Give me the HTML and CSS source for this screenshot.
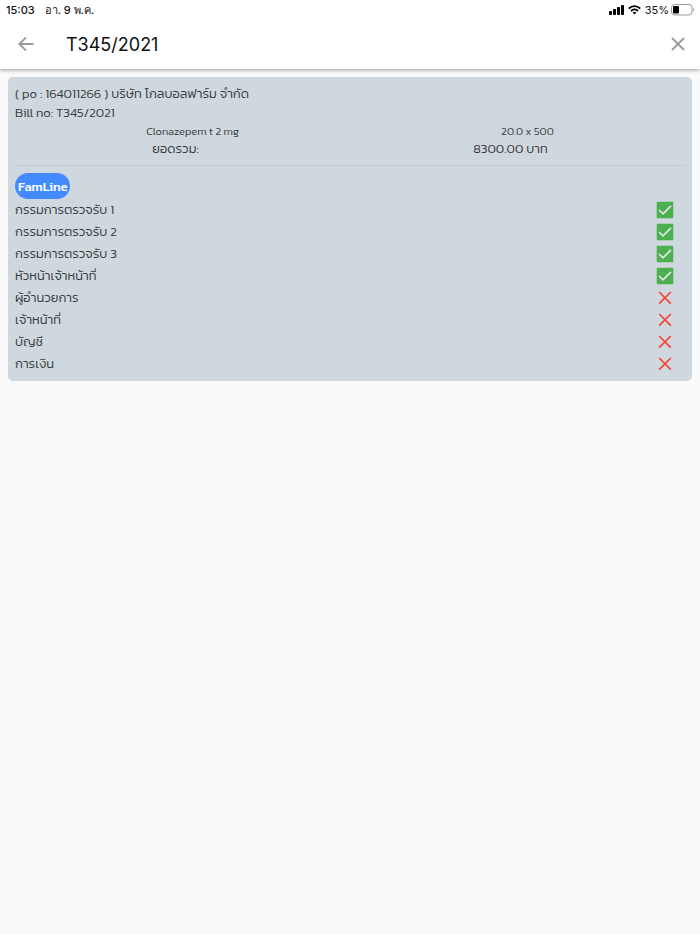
FILE: index.html
```html
<!DOCTYPE html>
<html lang="th">
	<head>
		<meta charset="UTF-8" />
		<meta name="viewport" content="width=device-width, initial-scale=1.0" />
		<title>T345/2021</title>
		<link rel="stylesheet" href="styles.css">
	</head>

	<body>
		<header class="header">
			<div class="status">
				<span class="status__time">15:03</span>
				<span class="status__date">อา. 9 พ.ค.</span>
				<svg class="status__signal" width="16" height="10" viewBox="0 0 16 10" aria-hidden="true">
					<rect x="0" y="6" width="3" height="4" rx="0.7" />
					<rect x="4" y="4" width="3" height="6" rx="0.7" />
					<rect x="8" y="2" width="3" height="8" rx="0.7" />
					<rect x="12" y="0" width="3" height="10" rx="0.7" />
				</svg>
				<svg class="status__wifi" width="13" height="10" viewBox="0 0 13 10" aria-hidden="true">
					<path d="M0.8 3.6 C4 0.3 9 0.3 12.2 3.6 M3 6 C5 4 8 4 10 6" />
					<path class="status__dot" d="M4.6 7.6 Q6.5 6.1 8.4 7.6 L6.5 9.6 Z" />
				</svg>
				<span class="status__percent">35%</span>
				<svg width="24" height="12" viewBox="0 0 24 12" aria-hidden="true">
					<rect x="0.5" y="0.5" width="20.5" height="10.5" rx="3" fill="none" stroke="#999" />
					<rect x="2" y="2" width="6" height="7.5" rx="1" />
					<path d="M22.3 4 Q24.4 5.8 22.3 7.6 Z" fill="#999" />
				</svg>
			</div>
			<div class="appbar">
				<button class="icon-button" type="button" aria-label="Back">
					<svg width="16" height="16" viewBox="0 0 16 16" aria-hidden="true">
						<path d="M15.5 8 H2 M8 1.3 L1.3 8 L8 14.7" />
					</svg>
				</button>
				<h1 class="appbar__title">T345/2021</h1>
				<button class="icon-button" type="button" aria-label="Close">
					<svg width="16" height="16" viewBox="0 0 16 16" aria-hidden="true">
						<path d="M2 2 L14 14 M14 2 L2 14" />
					</svg>
				</button>
			</div>
		</header>

		<main class="card">
			<p class="card__line">( po : 164011266 ) บริษัท โกลบอลฟาร์ม จำกัด</p>
			<p class="card__line">Bill no: T345/2021</p>
			<div class="item item--small">
				<span>Clonazepem t 2 mg</span>
				<span>20.0 x 500</span>
			</div>
			<div class="item">
				<span>ยอดรวม:</span>
				<span>8300.00 บาท</span>
			</div>
			<hr class="divider" />
			<button class="chip" type="button">FamLine</button>

			<!--approval steps: tick = done, cross = still waiting-->
			<ul class="steps">
				<li class="step">
					<span>กรรมการตรวจรับ 1</span>
					<svg class="step__done" viewBox="0 0 18 18" role="img" aria-label="done"><rect x="0.7" y="0.7" width="16.6" height="16.6" rx="1" /><path d="M3 9 L7 12.8 L15 4.8" /></svg>
				</li>
				<li class="step">
					<span>กรรมการตรวจรับ 2</span>
					<svg class="step__done" viewBox="0 0 18 18" role="img" aria-label="done"><rect x="0.7" y="0.7" width="16.6" height="16.6" rx="1" /><path d="M3 9 L7 12.8 L15 4.8" /></svg>
				</li>
				<li class="step">
					<span>กรรมการตรวจรับ 3</span>
					<svg class="step__done" viewBox="0 0 18 18" role="img" aria-label="done"><rect x="0.7" y="0.7" width="16.6" height="16.6" rx="1" /><path d="M3 9 L7 12.8 L15 4.8" /></svg>
				</li>
				<li class="step">
					<span>หัวหน้าเจ้าหน้าที่</span>
					<svg class="step__done" viewBox="0 0 18 18" role="img" aria-label="done"><rect x="0.7" y="0.7" width="16.6" height="16.6" rx="1" /><path d="M3 9 L7 12.8 L15 4.8" /></svg>
				</li>
				<li class="step">
					<span>ผู้อำนวยการ</span>
					<svg class="step__wait" viewBox="0 0 18 18" role="img" aria-label="waiting"><path d="M3.2 3 L14.8 14.6 M14.8 3 L3.2 14.6" /></svg>
				</li>
				<li class="step">
					<span>เจ้าหน้าที่</span>
					<svg class="step__wait" viewBox="0 0 18 18" role="img" aria-label="waiting"><path d="M3.2 3 L14.8 14.6 M14.8 3 L3.2 14.6" /></svg>
				</li>
				<li class="step">
					<span>บัญชี</span>
					<svg class="step__wait" viewBox="0 0 18 18" role="img" aria-label="waiting"><path d="M3.2 3 L14.8 14.6 M14.8 3 L3.2 14.6" /></svg>
				</li>
				<li class="step">
					<span>การเงิน</span>
					<svg class="step__wait" viewBox="0 0 18 18" role="img" aria-label="waiting"><path d="M3.2 3 L14.8 14.6 M14.8 3 L3.2 14.6" /></svg>
				</li>
			</ul>
		</main>
	</body>
</html>
```
FILE: styles.css
```css
* {
	box-sizing: border-box;
}
body {
	margin: 0;
	background-color: #fafafa;
	color: #37393b;
	font-family: Kanit, 'Noto Sans Thai', Inter, 'Noto Sans', sans-serif;
	font-size: 13px;
	font-weight: 300;
}
.header {
	background-color: #fff;
	box-shadow: 0 1px 4px rgba(0, 0, 0, 0.4);
	color: #111;
	font-family: Inter, sans-serif;
	font-weight: 400;
}
.status {
	display: flex;
	align-items: center;
	height: 19px;
	padding: 0 5px 0 6px;
	font-size: 11px;
	font-weight: 500;
}
.status__date {
	margin-left: 10px;
}
.status__signal {
	margin-left: auto;
}
.status__wifi {
	margin: 0 4px 0 3px;
	fill: none;
	stroke: #000;
	stroke-width: 1.8;
}
.status__dot {
	fill: #000;
	stroke: none;
}
.status__percent {
	margin-right: 2px;
	font-weight: 400;
}
.appbar {
	display: flex;
	align-items: center;
	height: 50px;
	padding: 0 10px;
}
.appbar__title {
	flex: 1;
	margin: 0 0 0 24px;
	font-size: 18px;
	font-weight: 400;
}
.icon-button {
	display: flex;
	align-items: center;
	justify-content: center;
	width: 32px;
	height: 32px;
	padding: 0;
	border: 0;
	background: transparent;
	cursor: pointer;
	fill: none;
	stroke: #999;
	stroke-width: 1.8;
}
.icon-button:last-child {
	margin-right: -4px;
}
.card {
	margin: 8px;
	padding: 7px 7px 6px;
	border-radius: 5px;
	background-color: #cfd8de;
}
.card__line {
	margin: 0;
	line-height: 19px;
}
.item {
	display: flex;
	justify-content: space-around;
	line-height: 18px;
}
.item--small {
	font-size: 11px;
}
.divider {
	margin: 7px 0;
	border: 0;
	border-top: 1px solid #c3cacd;
}
.chip {
	display: block;
	height: 26px;
	padding: 0 3px;
	border: 0;
	border-radius: 13px;
	background-color: #448aff;
	color: #fff;
	cursor: pointer;
	font: inherit;
	font-weight: 500;
}
.steps {
	margin: 0;
	padding: 0;
	list-style: none;
}
.step {
	display: flex;
	align-items: center;
	justify-content: space-between;
	height: 22px;
	padding-right: 11px;
	line-height: 22px;
}
.step svg {
	width: 18px;
	height: 18px;
	fill: none;
	stroke-width: 1.7;
}
.step__done {
	stroke: #dfe8e4;
}
.step__done rect {
	fill: #4caf50;
	stroke: none;
}
.step__wait {
	stroke: #f44336;
}
```
